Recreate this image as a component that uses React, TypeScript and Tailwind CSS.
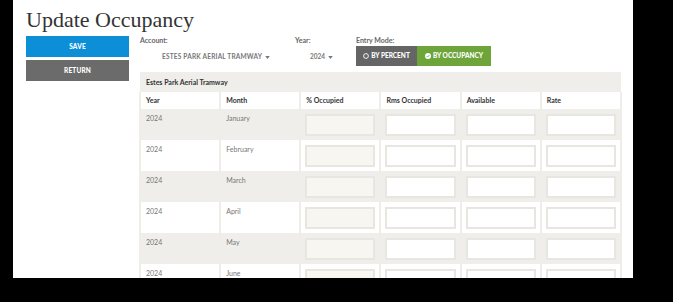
import React from "react";

const months = ["January", "February", "March", "April", "May", "June"];

function Caret() {
  return (
    <svg viewBox="0 0 6 4" className="inline-block w-[5px] h-[3px] ml-[3px] align-middle">
      <path d="M0 0h6L3 4z" fill="currentColor" />
    </svg>
  );
}

function RadioOff() {
  return (
    <svg viewBox="0 0 10 10" className="w-[6px] h-[6px]">
      <circle cx="5" cy="5" r="4" fill="none" stroke="white" strokeWidth="1.5" />
    </svg>
  );
}

function RadioOn() {
  return (
    <svg viewBox="0 0 10 10" className="w-[6px] h-[6px]">
      <circle cx="5" cy="5" r="5" fill="white" />
      <path d="M2.8 5.1l1.5 1.5 3-3.1" fill="none" stroke="#6da53a" strokeWidth="1.5" />
    </svg>
  );
}

function Cell({ children, input, disabled }: any) {
  return (
    <td className="border-x-2 border-[#eeede8] px-[4px] pt-[5px] pb-[3px] align-top h-[31px]">
      {input ? (
        <div
          className={`h-[22px] w-full border-2 border-[#e8e6e1] ${
            disabled ? "bg-[#f7f6f1]" : "bg-white"
          }`}
        />
      ) : (
        <div className="pl-[1px] leading-[8px] text-[7px] text-[#777]">{children}</div>
      )}
    </td>
  );
}

export default function App() {
  return (
    <div
      className="w-[673px] h-[302px] bg-black overflow-hidden"
      style={{ fontFamily: "Lato, 'Open Sans', sans-serif" }}
    >
      <div className="ml-[13px] w-[620px] h-[278px] bg-white overflow-hidden pl-[13px] pt-[7px]">
        <h1
          className="text-[22px] leading-[26px] text-[#333]"
          style={{ fontFamily: "'Liberation Serif', serif" }}
        >
          Update Occupancy
        </h1>

        <div className="flex mt-[3px]">
          {/* buttons */}
          <div className="w-[103px] flex flex-col gap-[3px]">
            <button className="h-[21px] bg-[#0c8fd7] text-white text-[6.5px] font-black tracking-wide">
              SAVE
            </button>
            <button className="h-[21px] bg-[#6b6b6b] text-white text-[6.5px] font-black tracking-wide">
              RETURN
            </button>
          </div>

          {/* main */}
          <div className="ml-[10px] w-[483px]">
            <div className="flex h-[36px]">
              <div className="w-[156px]">
                <div className="text-[7px] leading-[9px] font-bold text-[#666] pl-[1px]">Account:</div>
                <div className="mt-[7px] pl-[23px] text-[6.5px] leading-[9px] font-bold text-[#777] tracking-[0.2px]">
                  ESTES PARK AERIAL TRAMWAY
                  <Caret />
                </div>
              </div>
              <div className="w-[61px]">
                <div className="text-[7px] leading-[9px] font-bold text-[#666]">Year:</div>
                <div className="mt-[7px] pl-[15px] text-[6.5px] leading-[9px] font-bold text-[#777]">
                  2024
                  <Caret />
                </div>
              </div>
              <div>
                <div className="text-[7px] leading-[9px] font-bold text-[#666]">Entry Mode:</div>
                <div className="flex mt-[1px] h-[20px]">
                  <div className="w-[61px] bg-[#656565] flex items-center justify-center gap-[2px] text-white text-[6.5px] font-black">
                    <RadioOff />
                    BY PERCENT
                  </div>
                  <div className="w-[74px] bg-[#6da53a] flex items-center justify-center gap-[2px] text-white text-[6.5px] font-black">
                    <RadioOn />
                    BY OCCUPANCY
                  </div>
                </div>
              </div>
            </div>

            <table className="w-[483px] table-fixed border-collapse">
              <thead>
                <tr>
                  <th
                    colSpan={6}
                    className="h-[20px] bg-[#efeeea] text-left pl-[6px] text-[7px] font-bold text-[#333]"
                  >
                    Estes Park Aerial Tramway
                  </th>
                </tr>
                <tr className="bg-white">
                  {["Year", "Month", "% Occupied", "Rms Occupied", "Available", "Rate"].map((h) => (
                    <th
                      key={h}
                      className="h-[17px] border-x-2 border-[#eeede8] text-left pl-[5px] text-[7px] font-bold text-[#333]"
                    >
                      {h}
                    </th>
                  ))}
                </tr>
              </thead>
              <tbody>
                {months.map((m, i) => (
                  <tr key={m} className={i % 2 === 0 ? "bg-[#efeeea]" : "bg-white"}>
                    <Cell>2024</Cell>
                    <Cell>{m}</Cell>
                    <Cell input disabled />
                    <Cell input />
                    <Cell input />
                    <Cell input />
                  </tr>
                ))}
              </tbody>
            </table>
          </div>
        </div>
      </div>
    </div>
  );
}
